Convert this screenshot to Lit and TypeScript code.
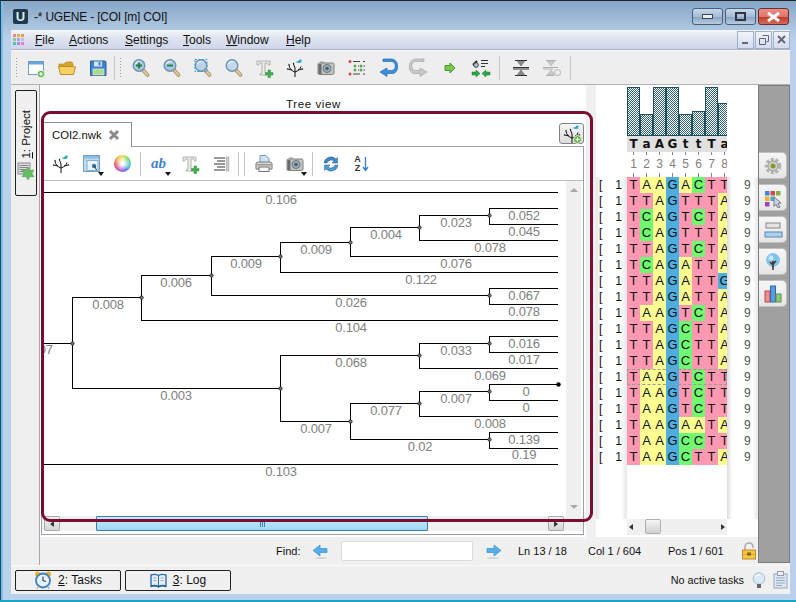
import { LitElement, html, css, svg } from "lit";
import { customElement } from "lit/decorators.js";

const I = (body: any, w = 20, h = 20) => html`<svg class="ic" width=${w} height=${h} viewBox="0 0 ${w} ${h}">${body}</svg>`;
const lens = (inner: any = "", fill = "#a9c8e0") => svg`
  <line x1="13" y1="12" x2="17.5" y2="17" stroke="#a88a5c" stroke-width="3.6" stroke-linecap="round"/>
  <line x1="13" y1="12" x2="17.5" y2="17" stroke="#e0c89c" stroke-width="2" stroke-linecap="round"/>
  <circle cx="9" cy="7.5" r="5.8" fill=${fill} stroke="#6d93b3" stroke-width="1.4"/>
  <path d="M5.5 6a4 4 0 0 1 5-2" fill="none" stroke="#e8f2fa" stroke-width="1.2"/>${inner}`;
const tp = svg`<path d="M3 3h13v4h-1.500l-1-2h-2.500v10l2 1v1H6v-1l2-1V5H5.500l-1 2H3z" fill="#ececec" stroke="#b0b0b0" stroke-width="1"/>
  <path d="M14 12h2.500v2.500H19v2.500h-2.500v2.500H14V17h-2.500v-2.500H14z" fill="#3fb14a" stroke="#2d8a38" stroke-width=".5"/>`;
const treeG = svg`<g fill="none" stroke="#111" stroke-width="1">
  <path d="M10 19V10M10 14C7 13 4.500 11 4 7M10 14c3-1 5.500-3 6-5.500M7 12L3 11M13 12l4-1M10 10L8.500 6"/></g>
  <g fill="#111"><circle cx="4" cy="6.500" r=".7"/><circle cx="2.500" cy="11" r=".7"/><circle cx="17.500" cy="11" r=".7"/><circle cx="8.500" cy="5.500" r=".7"/></g>
  <path d="M10.500 4l3-1 1-1.500 3 .5-1.500 1 .5 1.500-3 .5z" fill="#22a7c8"/>`;
const cam = svg`<rect x="2" y="5" width="16" height="11.500" rx="1.500" fill="#c4c4c4" stroke="#808080"/><rect x="2.500" y="6" width="3" height="10" fill="#6a6a6a"/>
  <rect x="4" y="3.500" width="4" height="2" fill="#a0a0a0"/><circle cx="11" cy="10.500" r="4" fill="#9cb0be" stroke="#707070"/><circle cx="11" cy="10.500" r="1.800" fill="#3f6078"/>`;

const ICONS: Record<string, any> = {
  newdoc: I(svg`<rect x="2.500" y="3.500" width="15" height="13" fill="#fff" stroke="#6d9cc6"/><rect x="3" y="4" width="14" height="2.500" fill="#6aa5d8"/>
    <circle cx="15" cy="16" r="3.600" fill="#68b04a" stroke="#dfe" stroke-width=".8"/><path d="M15 14v4M13 16h4" stroke="#fff" stroke-width="1.200"/>`),
  folder: I(svg`<path d="M2 6h5l2-2h6l1 2v3H2z" fill="#d8a32c" stroke="#b08520" stroke-width=".6"/><path d="M1.500 8.500h14l3 .5-2 7.500H3.500z" fill="#f6d264" stroke="#bb8d24"/>`),
  save: I(svg`<path d="M2.500 3h14.500l1 1v13.500H2.500z" fill="#3f84cf" stroke="#2d6098"/><rect x="6" y="3.500" width="8" height="5" fill="#d6e6f6"/><rect x="10.500" y="4" width="2" height="3.500" fill="#3f84cf"/>
    <rect x="5" y="11" width="11" height="6" fill="#a9dd8a" stroke="#eef" stroke-width=".6"/>`),
  zin: I(lens(svg`<path d="M9 4.500v6M6 7.500h6" stroke="#1f7d3c" stroke-width="1.800"/>`)),
  zout: I(lens(svg`<path d="M6 7.500h6" stroke="#1f7d3c" stroke-width="1.800"/>`)),
  zfit: I(lens(svg`<rect x="3" y="1.500" width="12" height="12" fill="none" stroke="#2c9be0" stroke-dasharray="2 1.500"/>`, "#bcd2e4")),
  z100: I(lens("", "#c4d8ea")),
  tplus: I(tp),
  tree: I(treeG),
  cam: I(cam),
  list: I(svg`<g fill="#d44"><circle cx="3" cy="3.500" r="1.500"/><circle cx="3" cy="16" r="1.500"/></g><g fill="#5aa85a"><circle cx="8" cy="8" r="1.500"/><circle cx="8" cy="12" r="1.500"/><circle cx="14" cy="8" r="1.500"/><circle cx="14" cy="12" r="1.500"/></g>
    <path d="M6 3.500h7M16 3.500h2M6 16h7M16 16h2M11 8h1M11 12h1M16.500 8h1.500M16.500 12h1.500" stroke="#444" stroke-width="1.200"/>`),
  undo: I(svg`<path d="M5 3h8.500c5 0 5 9 0 9H9v-2.500L2 13.500 9 18v-3h5.500c7 0 7-14.500-1-14.500H5z" transform="translate(0 .5)" fill="#3d8fdc" stroke="#1e6bb4" stroke-width=".7"/>`),
  redo: I(svg`<path d="M15 3H6.500c-5 0-5 9 0 9H11v-2.500l7 4L11 18v-3H5.500c-7 0-7-14.500 1-14.500H15z" transform="translate(0 .5)" fill="#c8c8c8" stroke="#a6a6a6" stroke-width=".7"/>`),
  garrow: I(svg`<path d="M5 7.500h5V5l5 5-5 5v-2.500H5z" fill="#7fc54a" stroke="#3e9a32"/>`),
  search: I(svg`<path d="M2 7l4-4" stroke="#222" stroke-width="2"/><circle cx="5" cy="7" r="2.300" fill="#b8cbe0" stroke="#333"/><path d="M10 2.500h7M10 5.500h7M10 8.500h4" stroke="#333" stroke-width="1.200"/>
    <path d="M1 14h4v-2l4 3.500-4 3.500v-2H1zM19 14h-4v-2l-4 3.500 4 3.500v-2h4z" fill="#2ca843" stroke="#137a2a" stroke-width=".5"/>`),
  alignA: I(svg`<path d="M4 2.500h12M4 17.500h12M2 9.500h16M2 11h16" stroke="#333" stroke-width="1"/><path d="M6.500 3.500h7L10 8zM6.500 16.500h7L10 12z" fill="#888" stroke="#555" stroke-width=".5"/>`),
  alignB: I(svg`<path d="M4 2.500h10M4 17.500h8M1 9.500h15M1 11h10" stroke="#b0b0b0"/><path d="M5.500 3.500h7L9 8zM5.500 16.500h7L9 12z" fill="#c8c8c8" stroke="#a8a8a8" stroke-width=".5"/><circle cx="15.500" cy="14.500" r="3" fill="none" stroke="#c0c0c0" stroke-width="1.100"/>`),
  layout: I(svg`<rect x="1.500" y="1.500" width="16" height="16" fill="#bcdcf2" stroke="#6ea0c8"/><rect x="2" y="2" width="15" height="2.500" fill="#88bce0"/><rect x="5" y="6.500" width="11" height="10" fill="#e8f2fa" stroke="#88b0d0"/>
    <circle cx="12" cy="12" r="2.200" fill="#3e7ea8"/><path d="M12 11l2.500 5" stroke="#333"/>`),
  ab: html`<span class="ab">ab</span>`,
  tlist: I(svg`<path d="M3 4h11M6 7h8M3 10h11M6 13h8M3 16h11" stroke="#333"/><rect x="15" y="3" width="3" height="14" fill="#c8c8c8" stroke="#aaa" stroke-width=".5"/>`),
  print: I(svg`<path d="M6 1.500h6l3 3v5H6z" fill="#cfe2f4" stroke="#6e9cc6"/><path d="M2 10c0-1.500 1-2 2-2h12c1 0 2 .5 2 2v5H2z" fill="#d8d8d8" stroke="#777"/><rect x="5" y="13" width="10" height="4.500" fill="#f4f4f4" stroke="#777"/><rect x="3" y="10" width="14" height="1.500" fill="#9a9a9a"/>`),
  refresh: I(svg`<path d="M3 9a7 7 0 0 1 12-4l1.500-1.500V9h-5.500l2-2a4.500 4.500 0 0 0-7 2z" fill="#3f87c2" stroke="#2a6391" stroke-width=".5"/><path d="M17 11a7 7 0 0 1-12 4l-1.500 1.500V11H9l-2 2a4.500 4.500 0 0 0 7-2z" fill="#4a9ad6" stroke="#2a6391" stroke-width=".5"/>`),
  sort: html`<span class="sortwrap"><span class="az">A<br/>Z</span><svg width="7" height="16" viewBox="0 0 7 16"><path d="M3.500 1v13M1 11l2.500 3.500L6 11" fill="none" stroke="#2f7fd0" stroke-width="1.300"/></svg></span>`,
  larrow: I(svg`<path d="M15 5.500H8V2L1 7.500 8 13V9.500h7z" transform="translate(0 1)" fill="#55aee8" stroke="#3c90cf" stroke-width=".7"/><ellipse cx="9" cy="16" rx="6" ry="1" fill="#d5d5d5"/>`, 16, 18),
  rarrow: I(svg`<path d="M1 5.500h7V2l7 5.500L8 13V9.500H1z" transform="translate(0 1)" fill="#55aee8" stroke="#3c90cf" stroke-width=".7"/><ellipse cx="7" cy="16" rx="6" ry="1" fill="#d5d5d5"/>`, 16, 18),
  lock: I(svg`<path d="M4 8V5a4 4 0 0 1 8 0v1" fill="none" stroke="#aaa" stroke-width="1.600"/><rect x="1.500" y="8" width="13" height="9" fill="#f3c64c" stroke="#c08a1c"/><rect x="2" y="12" width="12" height="1" fill="#e2a52a"/><rect x="6" y="10.500" width="4" height="3" fill="#8a6414"/>`, 16, 18),
  clock: I(svg`<circle cx="3.500" cy="3" r="2.500" fill="#eeae2a"/><circle cx="14.500" cy="3" r="2.500" fill="#eeae2a"/><circle cx="9" cy="9.500" r="7" fill="#e8f2fa" stroke="#3c80c0" stroke-width="1.800"/><path d="M9 5.500v4l3 1" fill="none" stroke="#345" stroke-width="1.200"/><path d="M4 16l-1 1.500M14 16l1 1.500" stroke="#777"/>`, 18, 18),
  book: I(svg`<path d="M1 3c3-1 5-1 7.500 .5C11 2 13 2 16 3v11c-3-1-5-1-7.500 .5C6 13 4 13 1 14z" fill="#e4eef8" stroke="#2f6fa8" stroke-width="1.400"/><path d="M8.500 3.500v11" stroke="#2f6fa8"/><path d="M3.500 6h3M3.500 8.500h3M10.500 6h3M10.500 8.500h3" stroke="#9ab" /><path d="M1 14.500c3-1 5-1 7.500 .5 2.500-1.500 4.500-1.500 7.500-.5" fill="none" stroke="#1e5a90" stroke-width="1.400"/>`, 17, 17),
  bulb: I(svg`<circle cx="7" cy="6.500" r="5.800" fill="#dbeaf6" stroke="#a4bdd0"/><path d="M4 4.500a4 4 0 0 1 4-1.500" fill="none" stroke="#fff" stroke-width="1.300"/><rect x="5" y="12" width="4" height="4" fill="#666"/>`, 14, 17),
  notes: I(svg`<rect x="1" y="3" width="13" height="14" fill="#dde8f2" stroke="#8fa8c0"/><rect x="4.500" y=".5" width="6" height="4" fill="#eef" stroke="#99a"/><path d="M3 7h9M3 9.500h9M3 12h9M3 14.500h6" stroke="#9ab"/>`, 15, 18),
  project: I(svg`<rect x="1" y="1" width="12" height="11" fill="#ddd" stroke="#888"/><path d="M2.500 3.500h9M2.500 5.500h9M2.500 7.500h9M2.500 9.500h9" stroke="#888"/><path d="M11 5l2 3.500 4-.5-2 3.500 2 3.500-4-.5-2 3.500-2-3.500-4 .5 2-3.500-2-3.500 4 .5z" fill="#62c062" stroke="#4a9a4a" stroke-width=".5"/>`, 18, 18),
  cornertree: I(svg`${treeG}<circle cx="15.500" cy="15.500" r="4" fill="#6cb04a" stroke="#e8f4e0"/><path d="M15.500 13.500v4M13.500 15.500h4" stroke="#fff" stroke-width="1.200"/>`),
  gear: I(svg`<circle cx="10" cy="10" r="6.500" fill="none" stroke="#b4b4b4" stroke-width="3.500" stroke-dasharray="3 1.600"/><circle cx="10" cy="10" r="5" fill="#d0d0d0" stroke="#999"/><circle cx="10" cy="10" r="2.500" fill="#8a9a20"/>`),
  palette: I(svg`<rect x="2" y="3" width="4.500" height="4.500" fill="#3f86d8"/><rect x="7.500" y="3" width="4.500" height="4.500" fill="#d84848"/><rect x="13" y="3" width="4.500" height="4.500" fill="#88b040"/><rect x="2" y="8.500" width="4.500" height="4.500" fill="#eeb030"/><rect x="7.500" y="8.500" width="4.500" height="4.500" fill="#3ab0c8"/><rect x="2" y="14" width="4.500" height="4.500" fill="#a040c0"/>
    <path d="M11 9l7 6-3 .5 2 3.500-2 1-2-3.500-2 2z" fill="#c8d4e0" stroke="#778"/>`),
  seqs: I(svg`<rect x="3" y="3" width="14" height="5" fill="#e4e4e4" stroke="#888"/><rect x="2" y="12" width="17" height="5" fill="#a8d0f0" stroke="#5a88b0"/>`),
  treeB: I(svg`<circle cx="10" cy="8" r="6.500" fill="#7ec4ea" stroke="#8ac8e8"/><circle cx="8" cy="6" r="2.500" fill="#c4e6f8"/><path d="M10 18V9M10 13l-3-3M10 12l3-3" stroke="#4a3020" stroke-width="1.600"/>`),
  chart: I(svg`<rect x="2" y="7" width="5" height="11" fill="#e89090" stroke="#b84848"/><rect x="7.500" y="2" width="5" height="16" fill="#5a9ae0" stroke="#2e68a8"/><rect x="13" y="10" width="5" height="8" fill="#90c878" stroke="#5a9048"/>`),
  close: I(svg`<path d="M2 2l8 8M10 2l-8 8" stroke="#8a8a8a" stroke-width="3"/>`, 12, 12),
};

const MENU: [string, string, number][] = [["F", "ile", 34], ["A", "ctions", 56], ["S", "ettings", 58], ["T", "ools", 43], ["W", "indow", 60], ["H", "elp", 30]];
const H: number[][] = [
  [44,192,558],[489,208,558],[489,224,558],[419,215,489],[419,240,558],[350,227,419],[350,256,558],[280,242,350],[280,272,558],[211,256,280],
  [211,295,489],[489,288,558],[489,304,558],[141,275,211],[141,320,558],[72,297,141],[44,343,72],
  [489,336,558],[489,352,558],[419,343,489],[419,368,558],[280,355,419],[489,384,558],[489,400,558],[419,391,489],[419,416,558],[350,403,419],
  [489,432,558],[489,448,558],[350,439,489],[280,421,350],[72,388,280],[44,464,558],
];
const V: number[][] = [[489,208,224],[419,215,240],[350,227,256],[280,242,272],[211,256,295],[489,288,304],[141,275,320],[72,297,388],[489,336,352],[419,343,368],[280,355,421],[489,384,400],[419,391,416],[350,403,439],[489,432,448]];
const N: number[][] = [[489,215],[419,227],[350,242],[280,256],[211,275],[141,297],[489,295],[72,343],[489,343],[419,355],[280,388],[489,391],[419,403],[350,421],[489,439]];
const L: [string, number, number][] = [
  ["0.106",281,200],["0.052",524,216],["0.045",524,232],["0.023",456,223],["0.078",490,248],["0.004",386,235],["0.076",456,264],["0.009",316,250],["0.122",421,280],["0.009",246,264],
  ["0.026",351,303],["0.067",524,296],["0.078",524,312],["0.006",176,283],["0.104",351,328],["0.008",108,305],["0.007",37,350],
  ["0.016",524,344],["0.017",524,360],["0.033",456,351],["0.069",490,376],["0.068",351,363],["0",526,392],["0",526,408],["0.007",456,399],["0.008",490,424],["0.077",386,411],
  ["0.139",524,440],["0.19",524,455],["0.02",420,447],["0.007",316,429],["0.003",176,396],["0.103",281,472],
];
const SEQ = ["TAAGACTT","TTAGTTTA","TCAGTCTA","TCAGTTTA","TTAGTCTA","TCAGATTA","TTAGATTG","TTAGATTA","TAAGTCTA","TTAGCTTA","TTAGCTTA","TTAGCTTA","TAAGTCTT","TAAGTCTT","TAAGTCTT","TAAGAATA","TAAGCCTT","TAAGCTTA"];
const BARS = [49,22,49,49,22,25,49,33];
const CONS = "TaAGttTa".split("");

@customElement("app-root")
export class AppRoot extends LitElement {
  static styles = css`
    :host { display: block; width: 796px; height: 602px; overflow: hidden; position: relative; font: 11px "Liberation Sans", sans-serif; color: #111; }
    * { box-sizing: border-box; }
    .ic { display: block; flex: none; }
    .window { width: 796px; height: 602px; display: flex; flex-direction: column; padding: 0 6px 6px 11px; background: linear-gradient(#86a5c6 0, #b6cde6 34px, #b9d1ea 40px); border-top: 1px solid #20262c; border-bottom: 2px solid #16a8c0; box-shadow: inset 1px 0 0 #1e4a5e, inset 3px 0 0 #78c0ec; }
    .title { height: 29px; display: flex; align-items: center; padding: 2px 1px 0 2px; }
    .logo { width: 15px; height: 15px; background: #1c3a4c; color: #dde8ee; font: bold 13px/15px "Liberation Sans", sans-serif; text-align: center; border-radius: 2px; margin-right: 6px; }
    .title-text { font-size: 12px; letter-spacing: -.2px; flex: 1; color: #111; }
    .wbtn { width: 31px; height: 17px; margin-left: 2px; border: 1px solid #4a6078; border-radius: 3px; background: linear-gradient(#c8d8ea 0, #a4bcd6 50%, #88a4c2 52%, #b8cce0 100%); display: flex; align-items: center; justify-content: center; }
    .wbtn.close { background: linear-gradient(#e89088 0, #e07468 50%, #c03828 52%, #d86a58 100%); border-color: #6a3030; }
    .menu { height: 20px; display: flex; align-items: center; background: linear-gradient(#f4f6fa, #dde3f0 45%, #ced6ea); border-bottom: 1px solid #aab2c8; padding-left: 2px; font-size: 12px; flex: none; }
    .apps { width: 22px; margin-right: 0; }
    .mi { display: block; }
    .mdi { margin-left: auto; display: flex; gap: 1px; padding-right: 0; }
    .mdi .b { width: 17px; height: 18px; border: 1px solid #9db0c8; background: linear-gradient(#f0f4fa, #d4dcee); display: flex; align-items: center; justify-content: center; }
    .tb { height: 35px; display: flex; align-items: center; background: #eeeeee; border-top: 1px solid #f8f8f8; border-bottom: 1px solid #b2b2b2; padding-left: 4px; flex: none; }
    .handle { width: 3px; height: 22px; margin-right: 2px; background: radial-gradient(circle, #999 0.7px, transparent 1px) 0 0 / 3px 3px; }
    .slot { width: 31px; height: 24px; position: relative; display: flex; align-items: center; justify-content: center; flex: none; }
    .slot.dd::after { content: ""; position: absolute; right: 3px; bottom: 0; border: 3.500px solid transparent; border-top: 4px solid #111; border-bottom: 0; }
    .sep { width: 1px; height: 24px; background: #c6c6c6; flex: none; }
    .sp1 { margin: 0 4px 0 1px; } .sp2 { margin: 0 5px 0 3px; } .sp3 { margin-left: 3px; }
    .ab { font: italic bold 15px "Liberation Serif", serif; color: #3f7fd0; }
    .wheel { width: 17px; height: 17px; border-radius: 50%; background: radial-gradient(circle, #fff 0 12%, transparent 70%), conic-gradient(#e8e04c, #5cd060, #40c8e0, #4a60e0, #c040d0, #e84050, #f0a040, #e8e04c); }
    .sortwrap { display: flex; align-items: center; gap: 1px; }
    .az { font: bold 9px/9px "Liberation Sans", sans-serif; color: #333; text-align: center; }
    .main { flex: 1; display: flex; min-height: 0; background: #f0f0f0; }
    .ldock { width: 29px; flex: none; border-right: 1px solid #a8a8a8; padding: 5px 0 0 4px; background: #efefef; }
    .vbtn { width: 22px; height: 106px; border: 1px solid #222; border-radius: 2px; background: #f0f0f0; display: flex; flex-direction: column; align-items: center; justify-content: flex-end; padding-bottom: 15px; gap: 3px; }
    .vtext { writing-mode: vertical-rl; transform: rotate(180deg); font-size: 11.500px; }
    .center { flex: 1; display: flex; flex-direction: column; min-width: 0; }
    .top { height: 452px; display: flex; flex: none; }
    .pane { width: 546px; flex: none; background: #fff; display: flex; flex-direction: column; padding-left: 1px; }
    .ptitle { height: 37px; text-align: center; padding-top: 13px; font-size: 11.500px; letter-spacing: .6px; flex: none; }
    .tabs { height: 24px; position: relative; display: flex; justify-content: space-between; padding-left: 3px; padding-right: 2px; flex: none; }
    .tab { width: 88px; height: 25px; border: 1px solid #8a9098; border-bottom: 0; border-left: 0; background: #fff; display: flex; align-items: center; padding-left: 8px; gap: 6px; z-index: 1; font-size: 11.300px; }
    .corner { width: 25px; height: 21px; border: 1px solid #808488; border-radius: 3px; background: linear-gradient(#f6f6f6, #dcdcdc); margin-top: 1px; display: flex; align-items: center; justify-content: center; }
    .box { width: 543px; height: 389px; border: 1px solid #9aa0a6; display: flex; flex-direction: column; flex: none; }
    .tt { height: 34px; flex: none; display: flex; align-items: center; padding-left: 3px; border-bottom: 1px solid #bcbcbc; }
    .tt .sep { margin: 0 2px; }
    .tt .sep.l { margin-left: 3px; margin-right: 3px; }
    .tree-row { height: 335px; display: flex; flex: none; }
    .tree { width: 524px; height: 335px; display: block; flex: none; }
    .tree text { font: 13px "Liberation Sans", sans-serif; letter-spacing: -.25px; fill: #808080; text-anchor: middle; }
    .vs { flex: 1; background: #f0f0f0; display: flex; flex-direction: column; justify-content: space-between; align-items: center; padding: 7px 0 7px; border-right: 2px solid #fff; }
    .au { border: 4px solid transparent; border-bottom: 4px solid #a8a8a8; border-top: 0; }
    .ad { border: 4px solid transparent; border-top: 4px solid #a8a8a8; border-bottom: 0; }
    .hs { height: 15px; background: #f0f0f0; display: flex; padding-left: 2px; flex: none; }
    .sb { width: 16px; height: 15px; border: 1px solid #a8a8a8; border-radius: 2px; background: linear-gradient(#f4f4f4, #d4d4d4); flex: none; display: flex; align-items: center; justify-content: center; }
    .al { border: 3px solid transparent; border-right: 4px solid #333; border-left: 0; }
    .ar { border: 3px solid transparent; border-left: 4px solid #333; border-right: 0; }
    .thumb { width: 332px; margin: 0 120px 0 36px; height: 15px; flex: none; border: 1px solid #3c7fb1; border-radius: 1px; background: linear-gradient(#c8e8fa, #a0d8f6); display: flex; justify-content: center; align-items: center; gap: 1px; }
    .thumb i { width: 1px; height: 6px; background: #3c7fb1; }
    .split { width: 10px; flex: none; background: #f0f0f0; }
    .msa { width: 162px; flex: none; background: #fff; display: grid; grid-template-columns: 31px 100px 31px; grid-template-rows: 92px 288px 54px 16px; position: relative; }
    .hd { grid-column: 2; }
    .bars { height: 51px; display: flex; align-items: flex-end; overflow: hidden; }
    .bar { width: 13px; flex: none; border: 1px solid #1f4e5f; margin-right: 0; background: repeating-conic-gradient(#2f6272 0 25%, #fff 0 50%) 0 0 / 2px 2px; }
    .cons { height: 16px; display: flex; overflow: hidden; background: #e0e0e0; }
    .cons span { width: 13px; flex: none; text-align: center; font: bold 12px/16px "DejaVu Sans", sans-serif; }
    .rule { height: 25px; display: flex; overflow: hidden; }
    .rule span { width: 13px; height: 25px; flex: none; text-align: center; font-size: 12px; line-height: 25px; color: #808080; background: linear-gradient(#888, #888) 6px 0 / 1px 3px no-repeat, linear-gradient(#888, #888) 6px 100% / 1px 4px no-repeat; }
    .names, .ends { display: flex; flex-direction: column; }
    .names div, .ends div { height: 16px; font: 12px/16px "Liberation Sans", sans-serif; display: flex; justify-content: space-between; }
    .names { background: linear-gradient(90deg, #e4e4e4, #fff 5px, #fff 25px, #e6e6e6); padding-left: 3px; padding-right: 5px; grid-column: 1; grid-row: 2 / 4; }
    .ends { background: linear-gradient(90deg, #dcdcdc, #fff 5px, #fff 25px, #e8e8e8); padding-left: 17px; color: #555; grid-column: 3; grid-row: 2 / 4; }
    .seqs { overflow: hidden; grid-column: 2; grid-row: 2; }
    .r { height: 16px; display: flex; position: relative; }
    .r.sel::after { content: ""; position: absolute; inset: 0; border: 1px dashed #999; }
    .c { width: 13px; height: 16px; flex: none; text-align: center; font: 13px/16px "Liberation Sans", sans-serif; }
    .c.T { background: #ff99b1; } .c.A { background: #fdff92; } .c.C { background: #70f970; } .c.G { background: #4eade1; }
    .mhs { grid-column: 2; grid-row: 4; height: 16px; background: #f0f0f0; display: flex; align-items: center; position: relative; padding: 0 2px; justify-content: space-between; }
    .mthumb { width: 16px; height: 15px; border: 1px solid #b0b0b0; border-radius: 2px; background: linear-gradient(#f6f6f6, #d0d0d0); position: absolute; left: 18px; top: 0; }
    .find { height: 28px; display: flex; align-items: center; background: #f0f0f0; padding-left: 236px; flex: none; }
    .find .lbl { width: 36px; }
    .inp { width: 132px; height: 20px; background: #fff; border: 1px solid #dcdcdc; border-radius: 2px; margin: 0 13px; flex: none; }
    .ln { width: 70px; margin-left: 16px; } .col { width: 80px; } .pos { width: 73px; }
    .rdock { width: 32px; height: 478px; flex: none; background: #a0a0a0; border: 1px solid #7c7c7c; padding-top: 66px; display: flex; flex-direction: column; gap: 5px; }
    .rb { width: 28px; height: 27px; background: linear-gradient(#f6f6f6, #e6e6e6); border: 1px solid #c0c0c0; border-left: 0; border-radius: 0 5px 5px 0; display: flex; align-items: center; justify-content: center; }
    .status { height: 29px; flex: none; display: flex; align-items: center; background: #f0f0f0; border-top: 1px solid #fbfbfb; padding: 0 2px 0 4px; gap: 4px; }
    .sbtn { width: 106px; height: 21px; border: 1px solid #222; border-radius: 2px; background: #f0f0f0; display: flex; align-items: center; justify-content: center; gap: 6px; font-size: 12px; }
    .st { margin-left: auto; font-size: 10.800px; margin-right: 4px; }
    .nt { margin-left: 3px; }
    .over { position: absolute; left: 41px; top: 111px; width: 552px; height: 411px; border: 3px solid #7b0c33; border-radius: 9px; pointer-events: none; z-index: 5; }
  `;

  slot_(k: string, dd = false) { return html`<div class="slot ${dd ? "dd" : ""}">${ICONS[k]}</div>`; }

  render() {
    return html`
    <div class="window">
      <div class="title">
        <div class="logo">U</div>
        <div class="title-text">-* UGENE - [COI [m] COI]</div>
        <div class="wbtn"><svg width="11" height="5"><rect x=".5" y=".5" width="10" height="4" fill="#eee" stroke="#445"/></svg></div>
        <div class="wbtn"><svg width="11" height="9"><rect x="1" y="1" width="9" height="7" fill="none" stroke="#334" stroke-width="2"/></svg></div>
        <div class="wbtn close"><svg width="15" height="10" viewBox="0 0 15 10"><path d="M2 1l11 8M13 1L2 9" stroke="#fff" stroke-width="3"/></svg></div>
      </div>
      <div class="menu">
        <div class="apps"><svg class="ic" width="12" height="12"><rect width="3" height="3" fill="#e88"/><rect x="4" width="3" height="3" fill="#ea6"/><rect x="8" width="3" height="3" fill="#e9a030"/><rect y="4" width="3" height="3" fill="#8c8"/><rect x="4" y="4" width="3" height="3" fill="#9ad"/><rect x="8" y="4" width="3" height="3" fill="#bbe"/><rect y="8" width="3" height="3" fill="#5bb"/><rect x="4" y="8" width="3" height="3" fill="#a8d"/><rect x="8" y="8" width="3" height="3" fill="#e7c"/></svg></div>
        ${MENU.map(([u, r, w]) => html`<div class="mi" style="width:${w}px"><u>${u}</u>${r}</div>`)}
        <div class="mdi">
          <div class="b"><svg width="9" height="9"><rect x="1" y="7" width="6" height="2" fill="#667"/></svg></div>
          <div class="b"><svg width="10" height="10"><path d="M3.500.5h6v6h-2M.5 3.500h6v6h-6z" fill="none" stroke="#667"/></svg></div>
          <div class="b"><svg width="9" height="9"><path d="M1 1l7 7M8 1L1 8" stroke="#667" stroke-width="2"/></svg></div>
        </div>
      </div>
      <div class="tb">
        <div class="handle"></div>
        ${["newdoc","folder","save"].map(k => this.slot_(k))}
        <div class="sep sp1"></div><div class="handle"></div>
        ${["zin","zout","zfit","z100","tplus","tree","cam","list","undo","redo","garrow","search"].map(k => this.slot_(k))}
        <div class="sep sp2"></div>
        ${this.slot_("alignA")}${this.slot_("alignB")}
        <div class="sep sp3"></div>
      </div>
      <div class="main">
        <div class="ldock"><div class="vbtn"><span class="vtext"><u>1</u>: Project</span>${ICONS.project}</div></div>
        <div class="center">
          <div class="top">
            <div class="pane">
              <div class="ptitle">Tree view</div>
              <div class="tabs">
                <div class="tab">COI2.nwk ${ICONS.close}</div>
                <div class="corner">${ICONS.cornertree}</div>
              </div>
              <div class="box">
                <div class="tt">
                  ${this.slot_("tree")}${this.slot_("layout", true)}<div class="slot"><div class="wheel"></div></div>
                  <div class="sep"></div>
                  ${this.slot_("ab", true)}${this.slot_("tplus")}${this.slot_("tlist")}
                  <div class="sep"></div><div class="sep l"></div>
                  ${this.slot_("print")}${this.slot_("cam", true)}
                  <div class="sep"></div>
                  ${this.slot_("refresh")}${this.slot_("sort")}
                </div>
                <div class="tree-row">
                  <svg class="tree" viewBox="42 181 524 335">
                    <g stroke="#000" stroke-width="1" shape-rendering="crispEdges">
                      ${H.map(([a, y, b]) => svg`<line x1=${a} x2=${b} y1=${y + .5} y2=${y + .5}/>`)}
                      ${V.map(([x, a, b]) => svg`<line x1=${x + .5} x2=${x + .5} y1=${a} y2=${b + 1}/>`)}
                    </g>
                    ${N.map(([x, y]) => svg`<circle cx=${x + .5} cy=${y + .5} r="1.700" fill="#777" stroke="#111" stroke-width=".7"/>`)}
                    <circle cx="558.500" cy="384.500" r="2.200" fill="#000"/>
                    ${L.map(([t, x, y]) => svg`<text x=${x} y=${y + 4}>${t}</text>`)}
                  </svg>
                  <div class="vs"><div class="au"></div><div class="ad"></div></div>
                </div>
                <div class="hs">
                  <div class="sb"><div class="al"></div></div>
                  <div class="thumb"><i></i><i></i><i></i></div>
                  <div class="sb"><div class="ar"></div></div>
                </div>
              </div>
            </div>
            <div class="split"></div>
            <div class="msa">
              <div class="hd">
                <div class="bars">${BARS.map(h => html`<div class="bar" style="height:${h}px"></div>`)}</div>
                <div class="cons">${CONS.map(c => html`<span>${c}</span>`)}</div>
                <div class="rule">${[1,2,3,4,5,6,7,8].map(n => html`<span>${n}</span>`)}</div>
              </div>
              <div class="names">${SEQ.map(() => html`<div><span>[</span><span>1</span></div>`)}</div>
              <div class="seqs">
                ${SEQ.map((s, i) => html`<div class="r ${i === 12 ? "sel" : ""}">${s.split("").map(c => html`<div class="c ${c}">${c}</div>`)}</div>`)}
              </div>
              <div class="ends">${SEQ.map(() => html`<div>9</div>`)}</div>
              <div class="mhs"><div class="al"></div><div class="mthumb"></div><div class="ar"></div></div>
            </div>
          </div>
          <div class="find">
            <span class="lbl">Find:</span><span>${ICONS.larrow}</span>
            <div class="inp"></div><span>${ICONS.rarrow}</span>
            <span class="ln">Ln 13 / 18</span><span class="col">Col 1 / 604</span><span class="pos">Pos 1 / 601</span>${ICONS.lock}
          </div>
        </div>
        <div class="rdock">
          ${["gear","palette","seqs","treeB","chart"].map(k => html`<div class="rb">${ICONS[k]}</div>`)}
        </div>
      </div>
      <div class="status">
        <div class="sbtn">${ICONS.clock}<span><u>2</u>: Tasks</span></div>
        <div class="sbtn">${ICONS.book}<span><u>3</u>: Log</span></div>
        <span class="st">No active tasks</span>${ICONS.bulb}<span class="nt">${ICONS.notes}</span>
      </div>
    </div>
    <div class="over"></div>`;
  }
}
